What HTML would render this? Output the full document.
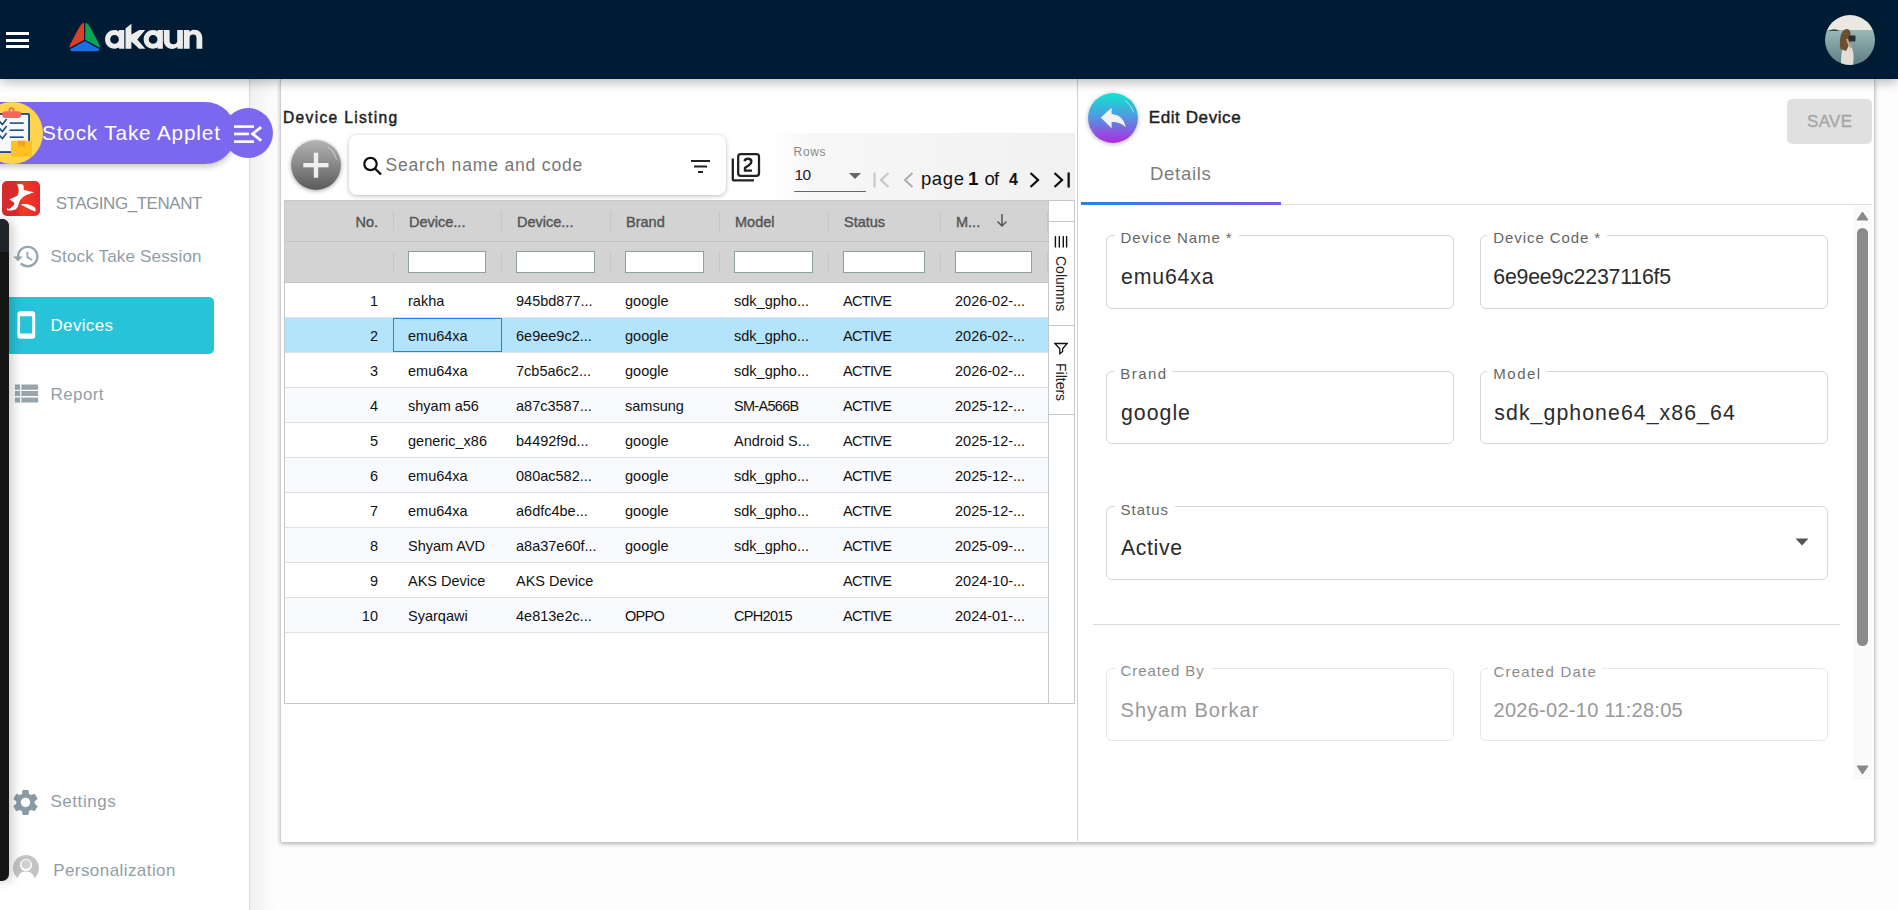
<!DOCTYPE html>
<html><head><meta charset="utf-8">
<style>
*{box-sizing:border-box;margin:0;padding:0}
html,body{width:1898px;height:910px;overflow:hidden;background:#fdfdfd;font-family:"Liberation Sans",sans-serif;position:relative}
.a{position:absolute}
.t{position:absolute;white-space:nowrap;line-height:1}
.gh{font-size:14.5px;font-weight:normal;color:#555;-webkit-text-stroke:0.4px #555}
.gd{font-size:14.5px;color:#111}
.box{position:absolute;border:1px solid #d6d6d6;border-radius:6px;background:#fff}
.notch{position:absolute;height:3px;background:#fff}
</style></head>
<body>
<div class="a" style="left:0;top:0;width:1898px;height:79px;background:#001b34;z-index:5;box-shadow:0 2px 12px rgba(0,0,0,.33)">
  <div class="a" style="left:6px;top:32px;width:23px;height:3px;background:#fff"></div>
  <div class="a" style="left:6px;top:38.5px;width:23px;height:3px;background:#fff"></div>
  <div class="a" style="left:6px;top:45px;width:23px;height:3px;background:#fff"></div>
  <svg class="a" style="left:68px;top:22px" width="34" height="30" viewBox="0 0 34 30">
    <path d="M16.1 18.1 V1.6 Q16 0.6 14.6 1.2 Q13 2 11.2 5.5 Q5 16.5 1.8 23.2 Q0.8 25.5 2.2 25.5 Z" fill="#d9402a"/>
    <path d="M17.3 17.7 V1.6 Q17.4 0.6 18.8 1.2 Q20.4 2 22.2 5.5 Q28.4 16.5 31.6 23.2 Q32.6 25.5 31.2 25.5 Z" fill="#07a55a"/>
    <path d="M16.8 19 L2.5 27 Q1.5 27.8 2.5 28.5 Q4 29.2 6 29.2 H27.5 Q29.5 29.2 31 28.5 Q32 27.8 31 27 Z" fill="#1a6fe8"/>
  </svg>
  <svg class="a" style="left:0;top:0" width="220" height="60" viewBox="0 0 220 60"><g fill="#ececec" fill-rule="evenodd">
  <path d="M114.5 29.9 A9.4 9.4 0 1 0 119 47.5 V48.7 H124.3 V29.9 H119 V31.2 A9.4 9.4 0 0 0 114.5 29.9 Z M114.5 35.1 A4.35 4.35 0 1 0 114.5 43.8 A4.35 4.35 0 1 0 114.5 35.1 Z"/>
  <path d="M125.5 28.6 L131.4 23.8 V34.6 L139.4 29.9 H145.2 L137.3 39.4 L145.3 48.7 H139.1 L131.4 41.6 V48.7 H125.5 Z"/>
  <path d="M153.1 29.9 A9.4 9.4 0 1 0 157.6 47.5 V48.7 H162.9 V29.9 H157.6 V31.2 A9.4 9.4 0 0 0 153.1 29.9 Z M153.1 35.1 A4.35 4.35 0 1 0 153.1 43.8 A4.35 4.35 0 1 0 153.1 35.1 Z"/>
  <path d="M163.8 29.9 H169.6 V40.5 A3.8 3.8 0 0 0 177.2 40.5 V29.9 H182.9 V48.7 H177.4 V46.8 C176 48.3 174.3 48.9 172.4 48.9 C167.4 48.9 163.8 45.5 163.8 40.5 Z"/>
  <path d="M183.8 48.7 V29.9 H189.4 V31.8 C190.8 30.3 192.5 29.7 194.4 29.7 C199 29.7 202.3 33 202.3 38 V48.7 H196.5 V38 A3.45 3.45 0 0 0 189.6 38 V48.7 Z"/>
</g></svg>
  <svg class="a" style="left:1825px;top:15px" width="50" height="50" viewBox="0 0 50 50">
    <defs><clipPath id="avc"><circle cx="25" cy="25" r="25"/></clipPath>
    <linearGradient id="sea" x1="0" y1="0" x2="0" y2="1"><stop offset="0" stop-color="#9bb8b8"/><stop offset="1" stop-color="#5c7e82"/></linearGradient></defs>
    <g clip-path="url(#avc)">
      <rect x="0" y="0" width="50" height="16" fill="#ebe8e2"/>
      <rect x="0" y="15" width="50" height="35" fill="url(#sea)"/>
      <path d="M3 16 Q8 13 13 15 L14 16 Z" fill="#3a4a48"/>
      <path d="M16 50 C16 40 17 33 19 31 C21 30 25 31 27 33 C29 38 29 44 28 50 Z" fill="#e2ddd5"/>
      <path d="M15.5 34 C14 28 15 18 19 15 C22 13 25 14 25.5 18 C26 24 24 31 21 36 Z" fill="#6b4f33"/>
      <rect x="23.5" y="20.5" width="7" height="6" rx="1" fill="#2e2e2e"/>
      <path d="M22 24 C23 28 25 31 26 33" stroke="#c9a88a" stroke-width="2" fill="none"/>
    </g>
  </svg>
</div>
<div class="a" style="left:0;top:79px;width:250px;height:831px;background:#fff;border-right:1px solid #d6d6d6"></div>
<div class="a" style="left:250px;top:79px;width:26px;height:831px;background:linear-gradient(90deg,#f1f1f1,#fdfdfd)"></div>
<div class="a" style="left:-6px;top:219px;width:15px;height:662px;background:#151515;border-radius:0 7px 7px 0;box-shadow:3px 0 12px rgba(0,0,0,.22);z-index:3;overflow:hidden">
  <div class="a" style="left:0;top:0;width:15px;height:33px;background:#1f232a"></div>
</div>
<div class="a" style="left:-40px;top:102px;width:276px;height:62px;background:#7b68ee;border-radius:31px;box-shadow:0 3px 6px rgba(0,0,0,.22)"></div>
<div class="a" style="left:223px;top:108px;width:50px;height:50px;background:#7b68ee;border-radius:50%"></div>
<svg class="a" style="left:230px;top:120px" width="36" height="28" viewBox="0 0 36 28">
  <rect x="4" y="5.3" width="20" height="2.6" fill="#fff"/>
  <rect x="4" y="12.6" width="15" height="2.7" fill="#fff"/>
  <rect x="4" y="20.3" width="20" height="2.7" fill="#fff"/>
  <path d="M31.2 7.2 L22.6 13.9 L31.2 20.6" stroke="#fff" stroke-width="2.8" fill="none"/>
</svg>
<div class="a" style="left:-19px;top:102px;width:62px;height:62px;background:#fdd54e;border-radius:50%"></div>
<svg class="a" style="left:0;top:105px" width="34" height="56" viewBox="0 0 34 56">
  <rect x="-6" y="8" width="36" height="40" rx="2" fill="#1c4f84"/>
  <rect x="-6" y="9.9" width="34.1" height="36.2" fill="#f7f8fb"/>
  <rect x="2.2" y="6.3" width="18.9" height="6.6" rx="3" fill="#f26a5f"/>
  <circle cx="11.5" cy="5.3" r="3" fill="#f26a5f"/>
  <circle cx="11.5" cy="5.3" r="1.2" fill="#fdd54e"/>
  <path d="M-1 16 L2.5 19.5 L6.6 14 M-1 23 L2.5 26.5 L6.6 21 M-1 30 L2.5 33.5 L6.6 28" stroke="#1c4f84" stroke-width="1.6" fill="none"/>
  <rect x="9.7" y="17.3" width="14" height="1.6" fill="#1c4f84"/>
  <rect x="9.7" y="24.4" width="14" height="1.6" fill="#1c4f84"/>
  <rect x="9.7" y="31.4" width="14" height="1.6" fill="#1c4f84"/>
  <rect x="11" y="35.7" width="21" height="16" rx="1" fill="#fec11f"/>
  <rect x="18" y="35.7" width="7" height="7" fill="#f9a21b"/>
  <path d="M18 42.7 L21.5 40.5 L25 42.7 Z" fill="#fec11f"/>
  <rect x="25" y="48.5" width="3" height="1.2" fill="#f9a21b"/>
</svg>
<div class="t" id="applet" style="left:42.00px;top:122.69px;font-size:20.8px;font-weight:normal;color:#fff;letter-spacing:0.812px;">Stock Take Applet</div>
<div class="a" style="left:2px;top:181px;width:38px;height:35px;border-radius:5px;background:linear-gradient(90deg,#d42a30,#d62a2a 35%,#ef3b25 55%,#e8282a)"></div>
<svg class="a" style="left:2px;top:181px" width="38" height="35" viewBox="0 0 38 35">
  <path d="M15.8 2.7 C18 2.8 20.5 3.2 21.3 3.9 C21.8 5.5 21.8 7.5 21.8 8.9 C25 9.8 29 10.3 32.2 11.3 C29 12.5 25.5 13.5 22.8 14.8 C20.5 16.3 18.8 18 17.8 19.7 C17 21.7 16.6 23.8 15.8 25.7 C15 27.2 14 28.2 12.9 28.7 C10 29.4 7.5 29.6 4.9 29.6 C5 28.5 5.2 27.5 5.4 26.7 C5.9 27.3 6.4 27.8 6.9 28.2 C9 26.8 10.8 25.3 11.9 23.7 C12.3 23 12.4 22.3 12.4 21.7 C10.5 20.5 8.7 19.5 7.4 18.3 C8.5 17.7 9.7 17.2 10.9 16.8 C12.4 16.2 13.9 15.5 15.3 14.8 C16.3 12.8 16.8 10.8 16.8 8.9 C16.6 7 16 5 15.3 3.4 Z" fill="#fff"/>
  <path d="M19.3 23.2 C21.5 22.8 23.6 22.9 25.7 23.2 C28.5 24 31 25 32.7 26.2 C33.5 27.5 33.8 29 33.6 30.6 C31.5 30 29.5 29.2 27.7 28.2 C25 26.7 22 25 19.3 23.7 Z" fill="#fff"/>
</svg>
<div class="t" id="tenant" style="left:55.70px;top:195.21px;font-size:17px;font-weight:normal;color:#8b969c;letter-spacing:-0.462px;">STAGING_TENANT</div>
<svg class="a" style="left:12px;top:242px" width="29" height="29" viewBox="0 0 24 24"><path fill="#97a6ae" d="M13 3a9 9 0 0 0-9 9H1l3.89 3.89.07.14L9 12H6c0-3.87 3.13-7 7-7s7 3.13 7 7-3.13 7-7 7c-1.93 0-3.68-.79-4.94-2.06l-1.42 1.42A8.954 8.954 0 0 0 13 21a9 9 0 0 0 0-18zm-1 5v5l4.28 2.54.72-1.21-3.5-2.08V8H12z"/></svg>
<div class="t" id="nav1" style="left:50.50px;top:247.91px;font-size:17px;font-weight:normal;color:#919ea6;letter-spacing:0.176px;">Stock Take Session</div>
<div class="a" style="left:0;top:297px;width:214px;height:57px;background:#26c3d9;border-radius:0 5px 5px 0"></div>
<svg class="a" style="left:17px;top:311px" width="20" height="29" viewBox="0 0 20 29"><path fill-rule="evenodd" fill="#fff" d="M3 0.3 H15.6 Q18.2 0.3 18.2 2.9 V25.1 Q18.2 27.7 15.6 27.7 H3 Q0.4 27.7 0.4 25.1 V2.9 Q0.4 0.3 3 0.3 Z M3.1 5.2 V22.6 H15.2 V5.2 Z"/></svg>
<div class="t" id="nav2" style="left:50.50px;top:316.81px;font-size:17px;font-weight:normal;color:#fff;letter-spacing:0.333px;">Devices</div>
<svg class="a" style="left:11px;top:378px" width="31" height="31" viewBox="0 0 24 24"><path fill="#97a6ae" d="M3 14h4v-4H3v4zm0 5h4v-4H3v4zM3 9h4V5H3v4zm5 5h13v-4H8v4zm0 5h13v-4H8v4zM8 5v4h13V5H8z"/></svg>
<div class="t" id="nav3" style="left:50.50px;top:385.61px;font-size:17px;font-weight:normal;color:#919ea6;letter-spacing:0.400px;">Report</div>
<svg class="a" style="left:10px;top:787px" width="31" height="31" viewBox="0 0 24 24"><path fill="#8a9ba5" d="M19.14 12.94c.04-.3.06-.61.06-.94 0-.32-.02-.64-.07-.94l2.03-1.58a.49.49 0 0 0 .12-.61l-1.92-3.32a.488.488 0 0 0-.59-.22l-2.39.96c-.5-.38-1.030-.7-1.62-.94l-.36-2.54a.484.484 0 0 0-.48-.41h-3.84c-.24 0-.43.17-.47.41l-.36 2.54c-.59.24-1.13.57-1.62.94l-2.39-.96c-.22-.08-.47 0-.59.22L2.74 8.870c-.12.21-.08.47.12.61l2.03 1.58c-.05.3-.09.63-.09.94s.02.64.07.94l-2.03 1.58a.49.49 0 0 0-.12.61l1.92 3.32c.12.22.37.29.59.22l2.39-.96c.5.38 1.03.7 1.62.94l.36 2.54c.05.24.24.41.48.41h3.84c.24 0 .44-.17.47-.41l.36-2.54c.59-.24 1.13-.56 1.62-.94l2.39.96c.22.08.47 0 .59-.22l1.92-3.32c.12-.22.07-.47-.12-.61l-2.01-1.58zM12 15.6c-1.98 0-3.6-1.62-3.6-3.6s1.62-3.6 3.6-3.6 3.6 1.62 3.6 3.6-1.62 3.6-3.6 3.6z"/></svg>
<div class="t" id="nav4" style="left:50.40px;top:792.91px;font-size:17px;font-weight:normal;color:#919ea6;letter-spacing:0.571px;">Settings</div>
<svg class="a" style="left:13px;top:855px" width="26" height="26" viewBox="0 0 26 26"><defs><clipPath id="pc"><rect x="0" y="0" width="26" height="24"/></clipPath></defs><g clip-path="url(#pc)"><circle cx="13" cy="13" r="13" fill="#c4c4c4"/><circle cx="13" cy="10" r="6" fill="#fff"/><path d="M4 26 C5 18 9 16.5 13 16.5 C17 16.5 21 18 22 26 Z" fill="#fff"/><circle cx="13" cy="9.5" r="4.6" fill="#d0d0d0"/></g></svg>
<div class="t" id="nav5" style="left:53.20px;top:862.01px;font-size:17px;font-weight:normal;color:#919ea6;letter-spacing:0.429px;">Personalization</div>
<div class="a" style="left:280px;top:79px;width:1595px;height:763px;background:#fff;border-left:1px solid #cfcfcf;border-right:1px solid #cfcfcf;box-shadow:0 2px 4px rgba(0,0,0,.28)"></div>
<div class="a" style="left:1077px;top:79px;width:1px;height:762px;background:#d0d0d0"></div>
<div class="t" id="title1" style="left:283.00px;top:109.79px;font-size:15.6px;font-weight:normal;color:#1e1e1e;letter-spacing:1.308px;-webkit-text-stroke:0.45px #1e1e1e">Device Listing</div>
<div class="a" style="left:772px;top:133px;width:303px;height:67px;background:linear-gradient(90deg,rgba(247,247,247,0),#f7f7f7 40px,#f1f1f1)"></div>
<div class="a" style="left:291px;top:140px;width:50px;height:50px;border-radius:50%;background:linear-gradient(180deg,#b4b4b4,#5b5b5b);box-shadow:0 1px 4px rgba(0,0,0,.35)"></div>
<svg class="a" style="left:291px;top:140px" width="50" height="50" viewBox="0 0 50 50">
  <rect x="22.8" y="12.7" width="4.4" height="25" fill="#efefef"/>
  <rect x="12.3" y="23" width="25.2" height="4.3" fill="#efefef"/>
  <path d="M37.1 6.9 Q43 11 45.5 19.6" stroke="rgba(255,255,255,.6)" stroke-width="0.9" fill="none"/>
</svg>
<div class="a" style="left:349px;top:135px;width:377px;height:60px;background:#fff;border-radius:8px;box-shadow:0 1px 4px rgba(0,0,0,.28)"></div>
<svg class="a" style="left:361px;top:155px" width="23" height="22" viewBox="0 0 23 22"><circle cx="9.5" cy="9" r="6.2" stroke="#111" stroke-width="2.2" fill="none"/><path d="M14 13.5 L20 19.5" stroke="#111" stroke-width="2.4"/></svg>
<div class="t" id="search" style="left:385.40px;top:157.39px;font-size:17.5px;font-weight:normal;color:#767676;letter-spacing:0.842px;">Search name and code</div>
<svg class="a" style="left:690px;top:159px" width="22" height="15" viewBox="0 0 22 15"><rect x="1" y="1" width="19" height="2" fill="#222"/><rect x="4" y="6.5" width="13" height="2" fill="#222"/><rect x="8" y="12" width="5" height="2" fill="#222"/></svg>
<svg class="a" style="left:731px;top:152px" width="30" height="30" viewBox="0 0 30 30">
  <path d="M1.8 6.5 V27 Q1.8 28.4 3.2 28.4 H23" stroke="#222" stroke-width="2.3" fill="none"/>
  <rect x="7.2" y="2.2" width="20.8" height="21.6" rx="2.5" stroke="#222" stroke-width="2.3" fill="none"/>
  <path d="M13.6 9.2 Q14 6.8 17 6.8 Q20.4 6.8 20.4 9.6 Q20.4 11.6 17.6 13.4 L14 15.8 V18.6 H21" stroke="#222" stroke-width="2.4" fill="none"/>
</svg>
<div class="t" id="rows" style="left:793.60px;top:146.04px;font-size:12px;font-weight:normal;color:#8a8a8a;letter-spacing:0.667px;">Rows</div>
<div class="t" id="ten" style="left:794.60px;top:166.68px;font-size:15.5px;font-weight:normal;color:#222;letter-spacing:-0.600px;">10</div>
<div class="t" id="page" style="left:920.90px;top:169.74px;font-size:18.5px;font-weight:normal;color:#111;letter-spacing:0.667px;">page</div>
<div class="t" id="pg1" style="left:968.00px;top:169.32px;font-size:19px;font-weight:bold;color:#111;letter-spacing:-6.000px;">1</div>
<div class="t" id="of" style="left:984.60px;top:169.74px;font-size:18.5px;font-weight:normal;color:#111;letter-spacing:-1.000px;">of</div>
<div class="t" id="pg4" style="left:1009.00px;top:171.86px;font-size:16px;font-weight:bold;color:#111;letter-spacing:9.000px;">4</div>
<div class="a" style="left:794px;top:191px;width:72px;height:1px;background:#666"></div>
<svg class="a" style="left:849px;top:173px" width="12" height="6" viewBox="0 0 12 6"><path d="M0 0 H12 L6 6 Z" fill="#666"/></svg>
<svg class="a" style="left:873px;top:172px" width="17" height="16" viewBox="0 0 17 16"><rect x="0.5" y="0.5" width="2" height="15" fill="#c9c2c2"/><path d="M15.5 1 L8 8 L15.5 15" stroke="#c9c2c2" stroke-width="2" fill="none"/></svg>
<svg class="a" style="left:903px;top:172px" width="11" height="16" viewBox="0 0 11 16"><path d="M9.5 1 L2 8 L9.5 15" stroke="#adadad" stroke-width="2" fill="none"/></svg>
<svg class="a" style="left:1029px;top:172px" width="11" height="16" viewBox="0 0 11 16"><path d="M1.5 1 L9 8 L1.5 15" stroke="#111" stroke-width="2.3" fill="none"/></svg>
<svg class="a" style="left:1053px;top:172px" width="18" height="16" viewBox="0 0 18 16"><path d="M1.5 1 L9 8 L1.5 15" stroke="#111" stroke-width="2.3" fill="none"/><rect x="14.5" y="0.5" width="2.3" height="15" fill="#111"/></svg>
<div class="a" style="left:284px;top:200px;width:791px;height:504px;border:1px solid #c3c9cd;background:#fff"></div>
<div class="a" style="left:285px;top:201px;width:763px;height:81px;background:#d3d3d3"></div>
<div class="a" style="left:285px;top:241px;width:763px;height:1px;background:#bcc4c8"></div>
<div class="a" style="left:285px;top:282px;width:763px;height:1px;background:#bcc4c8"></div>
<div class="a" style="left:393px;top:211px;width:1px;height:20px;background:#c6c6c6"></div>
<div class="a" style="left:393px;top:252px;width:1px;height:21px;background:#c6c6c6"></div>
<div class="a" style="left:501px;top:211px;width:1px;height:20px;background:#c6c6c6"></div>
<div class="a" style="left:501px;top:252px;width:1px;height:21px;background:#c6c6c6"></div>
<div class="a" style="left:610px;top:211px;width:1px;height:20px;background:#c6c6c6"></div>
<div class="a" style="left:610px;top:252px;width:1px;height:21px;background:#c6c6c6"></div>
<div class="a" style="left:719px;top:211px;width:1px;height:20px;background:#c6c6c6"></div>
<div class="a" style="left:719px;top:252px;width:1px;height:21px;background:#c6c6c6"></div>
<div class="a" style="left:828px;top:211px;width:1px;height:20px;background:#c6c6c6"></div>
<div class="a" style="left:828px;top:252px;width:1px;height:21px;background:#c6c6c6"></div>
<div class="a" style="left:940px;top:211px;width:1px;height:20px;background:#c6c6c6"></div>
<div class="a" style="left:940px;top:252px;width:1px;height:21px;background:#c6c6c6"></div>
<div class="a" style="left:1047px;top:211px;width:1px;height:20px;background:#c6c6c6"></div>
<div class="a" style="left:1047px;top:252px;width:1px;height:21px;background:#c6c6c6"></div>
<div class="t gh" style="right:1520px;top:215.43px;letter-spacing:0px">No.</div>
<div class="t gh" style="left:409px;top:215.43px;letter-spacing:0px">Device...</div>
<div class="a" style="left:408px;top:251px;width:78px;height:22px;background:#fff;border:1px solid #8ea0a0"></div>
<div class="t gh" style="left:517px;top:215.43px;letter-spacing:0px">Device...</div>
<div class="a" style="left:516px;top:251px;width:79px;height:22px;background:#fff;border:1px solid #8ea0a0"></div>
<div class="t gh" style="left:626px;top:215.43px;letter-spacing:0px">Brand</div>
<div class="a" style="left:625px;top:251px;width:79px;height:22px;background:#fff;border:1px solid #8ea0a0"></div>
<div class="t gh" style="left:735px;top:215.43px;letter-spacing:0px">Model</div>
<div class="a" style="left:734px;top:251px;width:79px;height:22px;background:#fff;border:1px solid #8ea0a0"></div>
<div class="t gh" style="left:844px;top:215.43px;letter-spacing:0px">Status</div>
<div class="a" style="left:843px;top:251px;width:82px;height:22px;background:#fff;border:1px solid #8ea0a0"></div>
<div class="t gh" style="left:956px;top:215.43px;letter-spacing:0px">M...</div>
<div class="a" style="left:955px;top:251px;width:77px;height:22px;background:#fff;border:1px solid #8ea0a0"></div>
<svg class="a" style="left:996px;top:213px" width="12" height="15" viewBox="0 0 12 15"><path d="M6 1 V13 M1.5 8.5 L6 13 L10.5 8.5" stroke="#555" stroke-width="1.5" fill="none"/></svg>
<div class="a" style="left:285px;top:283px;width:763px;height:34px;background:#fff"></div>
<div class="a" style="left:285px;top:317px;width:763px;height:1px;background:#dde1e4"></div>
<div class="t gd" style="right:1520px;top:293.93px">1</div>
<div class="t gd" style="left:408px;top:293.93px;letter-spacing:0px">rakha</div>
<div class="t gd" style="left:516px;top:293.93px;letter-spacing:0px">945bd877...</div>
<div class="t gd" style="left:625px;top:293.93px;letter-spacing:0px">google</div>
<div class="t gd" style="left:734px;top:293.93px;letter-spacing:0px">sdk_gpho...</div>
<div class="t gd" style="left:843px;top:293.93px;letter-spacing:-0.7px">ACTIVE</div>
<div class="t gd" style="left:955px;top:293.93px;letter-spacing:0px">2026-02-...</div>
<div class="a" style="left:285px;top:318px;width:763px;height:34px;background:#b4e4fb"></div>
<div class="a" style="left:285px;top:352px;width:763px;height:1px;background:#dde1e4"></div>
<div class="t gd" style="right:1520px;top:328.93px">2</div>
<div class="t gd" style="left:408px;top:328.93px;letter-spacing:0px">emu64xa</div>
<div class="t gd" style="left:516px;top:328.93px;letter-spacing:0px">6e9ee9c2...</div>
<div class="t gd" style="left:625px;top:328.93px;letter-spacing:0px">google</div>
<div class="t gd" style="left:734px;top:328.93px;letter-spacing:0px">sdk_gpho...</div>
<div class="t gd" style="left:843px;top:328.93px;letter-spacing:-0.7px">ACTIVE</div>
<div class="t gd" style="left:955px;top:328.93px;letter-spacing:0px">2026-02-...</div>
<div class="a" style="left:285px;top:353px;width:763px;height:34px;background:#fff"></div>
<div class="a" style="left:285px;top:387px;width:763px;height:1px;background:#dde1e4"></div>
<div class="t gd" style="right:1520px;top:363.93px">3</div>
<div class="t gd" style="left:408px;top:363.93px;letter-spacing:0px">emu64xa</div>
<div class="t gd" style="left:516px;top:363.93px;letter-spacing:0px">7cb5a6c2...</div>
<div class="t gd" style="left:625px;top:363.93px;letter-spacing:0px">google</div>
<div class="t gd" style="left:734px;top:363.93px;letter-spacing:0px">sdk_gpho...</div>
<div class="t gd" style="left:843px;top:363.93px;letter-spacing:-0.7px">ACTIVE</div>
<div class="t gd" style="left:955px;top:363.93px;letter-spacing:0px">2026-02-...</div>
<div class="a" style="left:285px;top:388px;width:763px;height:34px;background:#f9fafd"></div>
<div class="a" style="left:285px;top:422px;width:763px;height:1px;background:#dde1e4"></div>
<div class="t gd" style="right:1520px;top:398.93px">4</div>
<div class="t gd" style="left:408px;top:398.93px;letter-spacing:0px">shyam a56</div>
<div class="t gd" style="left:516px;top:398.93px;letter-spacing:0px">a87c3587...</div>
<div class="t gd" style="left:625px;top:398.93px;letter-spacing:0px">samsung</div>
<div class="t gd" style="left:734px;top:398.93px;letter-spacing:-0.7px">SM-A566B</div>
<div class="t gd" style="left:843px;top:398.93px;letter-spacing:-0.7px">ACTIVE</div>
<div class="t gd" style="left:955px;top:398.93px;letter-spacing:0px">2025-12-...</div>
<div class="a" style="left:285px;top:423px;width:763px;height:34px;background:#fff"></div>
<div class="a" style="left:285px;top:457px;width:763px;height:1px;background:#dde1e4"></div>
<div class="t gd" style="right:1520px;top:433.93px">5</div>
<div class="t gd" style="left:408px;top:433.93px;letter-spacing:0px">generic_x86</div>
<div class="t gd" style="left:516px;top:433.93px;letter-spacing:0px">b4492f9d...</div>
<div class="t gd" style="left:625px;top:433.93px;letter-spacing:0px">google</div>
<div class="t gd" style="left:734px;top:433.93px;letter-spacing:0px">Android S...</div>
<div class="t gd" style="left:843px;top:433.93px;letter-spacing:-0.7px">ACTIVE</div>
<div class="t gd" style="left:955px;top:433.93px;letter-spacing:0px">2025-12-...</div>
<div class="a" style="left:285px;top:458px;width:763px;height:34px;background:#f9fafd"></div>
<div class="a" style="left:285px;top:492px;width:763px;height:1px;background:#dde1e4"></div>
<div class="t gd" style="right:1520px;top:468.93px">6</div>
<div class="t gd" style="left:408px;top:468.93px;letter-spacing:0px">emu64xa</div>
<div class="t gd" style="left:516px;top:468.93px;letter-spacing:0px">080ac582...</div>
<div class="t gd" style="left:625px;top:468.93px;letter-spacing:0px">google</div>
<div class="t gd" style="left:734px;top:468.93px;letter-spacing:0px">sdk_gpho...</div>
<div class="t gd" style="left:843px;top:468.93px;letter-spacing:-0.7px">ACTIVE</div>
<div class="t gd" style="left:955px;top:468.93px;letter-spacing:0px">2025-12-...</div>
<div class="a" style="left:285px;top:493px;width:763px;height:34px;background:#fff"></div>
<div class="a" style="left:285px;top:527px;width:763px;height:1px;background:#dde1e4"></div>
<div class="t gd" style="right:1520px;top:503.93px">7</div>
<div class="t gd" style="left:408px;top:503.93px;letter-spacing:0px">emu64xa</div>
<div class="t gd" style="left:516px;top:503.93px;letter-spacing:0px">a6dfc4be...</div>
<div class="t gd" style="left:625px;top:503.93px;letter-spacing:0px">google</div>
<div class="t gd" style="left:734px;top:503.93px;letter-spacing:0px">sdk_gpho...</div>
<div class="t gd" style="left:843px;top:503.93px;letter-spacing:-0.7px">ACTIVE</div>
<div class="t gd" style="left:955px;top:503.93px;letter-spacing:0px">2025-12-...</div>
<div class="a" style="left:285px;top:528px;width:763px;height:34px;background:#f9fafd"></div>
<div class="a" style="left:285px;top:562px;width:763px;height:1px;background:#dde1e4"></div>
<div class="t gd" style="right:1520px;top:538.93px">8</div>
<div class="t gd" style="left:408px;top:538.93px;letter-spacing:0px">Shyam AVD</div>
<div class="t gd" style="left:516px;top:538.93px;letter-spacing:0px">a8a37e60f...</div>
<div class="t gd" style="left:625px;top:538.93px;letter-spacing:0px">google</div>
<div class="t gd" style="left:734px;top:538.93px;letter-spacing:0px">sdk_gpho...</div>
<div class="t gd" style="left:843px;top:538.93px;letter-spacing:-0.7px">ACTIVE</div>
<div class="t gd" style="left:955px;top:538.93px;letter-spacing:0px">2025-09-...</div>
<div class="a" style="left:285px;top:563px;width:763px;height:34px;background:#fff"></div>
<div class="a" style="left:285px;top:597px;width:763px;height:1px;background:#dde1e4"></div>
<div class="t gd" style="right:1520px;top:573.93px">9</div>
<div class="t gd" style="left:408px;top:573.93px;letter-spacing:0px">AKS Device</div>
<div class="t gd" style="left:516px;top:573.93px;letter-spacing:0px">AKS Device</div>
<div class="t gd" style="left:843px;top:573.93px;letter-spacing:-0.7px">ACTIVE</div>
<div class="t gd" style="left:955px;top:573.93px;letter-spacing:0px">2024-10-...</div>
<div class="a" style="left:285px;top:598px;width:763px;height:34px;background:#f9fafd"></div>
<div class="a" style="left:285px;top:632px;width:763px;height:1px;background:#dde1e4"></div>
<div class="t gd" style="right:1520px;top:608.93px">10</div>
<div class="t gd" style="left:408px;top:608.93px;letter-spacing:0px">Syarqawi</div>
<div class="t gd" style="left:516px;top:608.93px;letter-spacing:0px">4e813e2c...</div>
<div class="t gd" style="left:625px;top:608.93px;letter-spacing:-0.7px">OPPO</div>
<div class="t gd" style="left:734px;top:608.93px;letter-spacing:-0.7px">CPH2015</div>
<div class="t gd" style="left:843px;top:608.93px;letter-spacing:-0.7px">ACTIVE</div>
<div class="t gd" style="left:955px;top:608.93px;letter-spacing:0px">2024-01-...</div>
<div class="a" style="left:393px;top:318px;width:109px;height:34px;border:1px solid #1a88e0"></div>
<div class="a" style="left:1048px;top:201px;width:1px;height:502px;background:#c3c9cd"></div>
<div class="a" style="left:1049px;top:221px;width:25px;height:1px;background:#c3c9cd"></div>
<div class="a" style="left:1049px;top:325px;width:25px;height:1px;background:#c3c9cd"></div>
<div class="a" style="left:1049px;top:414px;width:25px;height:1px;background:#c3c9cd"></div>
<svg class="a" style="left:1054px;top:236px" width="15" height="13" viewBox="0 0 15 13"><rect x="0.7" y="0.1" width="1.4" height="11.4" fill="#111"/><rect x="4.6" y="0.1" width="1.4" height="11.4" fill="#111"/><rect x="8.6" y="0.1" width="1.4" height="11.4" fill="#111"/><rect x="11.9" y="0.1" width="1.4" height="11.4" fill="#111"/></svg>
<div class="t" style="left:1054px;top:256px;font-size:14px;color:#222;writing-mode:vertical-rl">Columns</div>
<svg class="a" style="left:1054px;top:342px" width="14" height="13" viewBox="0 0 14 13"><path d="M0.9 1.5 H13.2 L8.6 6.8 V9.5 L5.8 11.7 V6.8 Z" stroke="#111" stroke-width="1.3" fill="none" stroke-linejoin="miter"/></svg>
<div class="t" style="left:1054px;top:363px;font-size:14px;color:#222;writing-mode:vertical-rl">Filters</div>
<div class="a" style="left:1088px;top:93px;width:50px;height:50px;border-radius:50%;background:linear-gradient(180deg,#0fe4cf 0%,#4d9ee0 45%,#b029e0 100%);box-shadow:0 1px 4px rgba(0,0,0,.3)"></div>
<svg class="a" style="left:1088px;top:93px" width="50" height="50" viewBox="0 0 50 50">
  <path d="M12.7 24.6 L23.6 14.8 V20.9 C31 21.5 36.5 26 37.6 34.2 C34 30.5 30 29 23.6 29 V35.2 Z" fill="#f2f2f2"/>
  <path d="M36.9 7.3 Q43 11.5 45.8 19.5" stroke="rgba(255,255,255,.6)" stroke-width="1" fill="none"/>
</svg>
<div class="t" id="title2" style="left:1148.70px;top:108.71px;font-size:17px;font-weight:normal;color:#1e1e1e;letter-spacing:0.600px;-webkit-text-stroke:0.45px #1e1e1e">Edit Device</div>
<div class="a" style="left:1787px;top:99px;width:85px;height:45px;border-radius:5px;background:#e0e0e0"></div>
<div class="t" id="save" style="left:1807.00px;top:113.01px;font-size:17px;font-weight:normal;color:#a6a6a6;letter-spacing:0.333px;-webkit-text-stroke:0.35px #a6a6a6">SAVE</div>
<div class="t" id="details" style="left:1150.00px;top:165.16px;font-size:18.6px;font-weight:normal;color:#7c7c7c;letter-spacing:0.667px;">Details</div>
<div class="a" style="left:1081px;top:204px;width:791px;height:1px;background:#dedede"></div>
<div class="a" style="left:1081px;top:202px;width:200px;height:3px;background:linear-gradient(90deg,#2c7fe2,#7a5de3)"></div>
<div class="a" style="left:1853px;top:206px;width:19px;height:574px;background:#fafafa"></div>
<svg class="a" style="left:1856px;top:211px" width="13" height="10" viewBox="0 0 13 10"><path d="M6.5 1 L12 9 H1 Z" fill="#8a8a8a" stroke="#8a8a8a" stroke-width="1" stroke-linejoin="round"/></svg>
<div class="a" style="left:1857px;top:228px;width:11px;height:418px;border-radius:6px;background:#8a8a8a"></div>
<svg class="a" style="left:1856px;top:765px" width="13" height="10" viewBox="0 0 13 10"><path d="M1 1 H12 L6.5 9 Z" fill="#8a8a8a" stroke="#8a8a8a" stroke-width="1" stroke-linejoin="round"/></svg>
<div class="box" style="left:1106px;top:235px;width:348px;height:74px;border-color:#d6d6d6"></div>
<div class="notch" style="left:1114.6px;top:234px;width:124.0px"></div>
<div class="t" id="l1" style="left:1120.60px;top:230.40px;font-size:15px;font-weight:normal;color:#666;letter-spacing:0.917px;">Device Name *</div>
<div class="t" id="v1" style="left:1121.00px;top:266.97px;font-size:21.3px;font-weight:normal;color:#2b2b2b;letter-spacing:0.833px;">emu64xa</div>
<div class="box" style="left:1480px;top:235px;width:348px;height:74px;border-color:#d6d6d6"></div>
<div class="notch" style="left:1487.3px;top:234px;width:119.3px"></div>
<div class="t" id="l2" style="left:1493.30px;top:230.40px;font-size:15px;font-weight:normal;color:#666;letter-spacing:0.917px;">Device Code *</div>
<div class="t" id="v2" style="left:1493.30px;top:266.97px;font-size:21.3px;font-weight:normal;color:#2b2b2b;letter-spacing:-0.200px;">6e9ee9c2237116f5</div>
<div class="box" style="left:1106px;top:371px;width:348px;height:73px;border-color:#d6d6d6"></div>
<div class="notch" style="left:1114.2px;top:370px;width:58.0px"></div>
<div class="t" id="l3" style="left:1120.20px;top:366.40px;font-size:15px;font-weight:normal;color:#666;letter-spacing:1.500px;">Brand</div>
<div class="t" id="v3" style="left:1121.00px;top:402.97px;font-size:21.3px;font-weight:normal;color:#2b2b2b;letter-spacing:1.000px;">google</div>
<div class="box" style="left:1480px;top:371px;width:348px;height:73px;border-color:#d6d6d6"></div>
<div class="notch" style="left:1487.3px;top:370px;width:59.3px"></div>
<div class="t" id="l4" style="left:1493.30px;top:366.40px;font-size:15px;font-weight:normal;color:#666;letter-spacing:1.500px;">Model</div>
<div class="t" id="v4" style="left:1494.30px;top:402.97px;font-size:21.3px;font-weight:normal;color:#2b2b2b;letter-spacing:1.056px;">sdk_gphone64_x86_64</div>
<div class="box" style="left:1106px;top:506px;width:722px;height:74px;border-color:#d6d6d6"></div>
<div class="notch" style="left:1114.5px;top:505px;width:60.0px"></div>
<div class="t" id="l5" style="left:1120.50px;top:501.70px;font-size:15px;font-weight:normal;color:#666;letter-spacing:1.000px;">Status</div>
<div class="t" id="v5" style="left:1121.00px;top:538.47px;font-size:21.3px;font-weight:normal;color:#2b2b2b;letter-spacing:0.600px;">Active</div>
<svg class="a" style="left:1795px;top:538px" width="14" height="8" viewBox="0 0 14 8"><path d="M0.5 0.5 H13.5 L7 7.5 Z" fill="#555"/></svg>
<div class="a" style="left:1093px;top:624px;width:747px;height:1px;background:#dcdcdc"></div>
<div class="box" style="left:1106px;top:668px;width:348px;height:73px;border-color:#e8e8e8"></div>
<div class="notch" style="left:1114.6px;top:667px;width:96.2px"></div>
<div class="t" id="l6" style="left:1120.60px;top:663.40px;font-size:15px;font-weight:normal;color:#8c8c8c;letter-spacing:0.889px;">Created By</div>
<div class="t" id="v6" style="left:1120.60px;top:700.27px;font-size:20px;font-weight:normal;color:#999;letter-spacing:1.000px;">Shyam Borkar</div>
<div class="box" style="left:1480px;top:668px;width:348px;height:73px;border-color:#e8e8e8"></div>
<div class="notch" style="left:1487.5px;top:667px;width:114.3px"></div>
<div class="t" id="l7" style="left:1493.50px;top:663.50px;font-size:15px;font-weight:normal;color:#8c8c8c;letter-spacing:1.182px;">Created Date</div>
<div class="t" id="v7" style="left:1493.50px;top:700.07px;font-size:20px;font-weight:normal;color:#999;letter-spacing:0.278px;">2026-02-10 11:28:05</div>
</body></html>
